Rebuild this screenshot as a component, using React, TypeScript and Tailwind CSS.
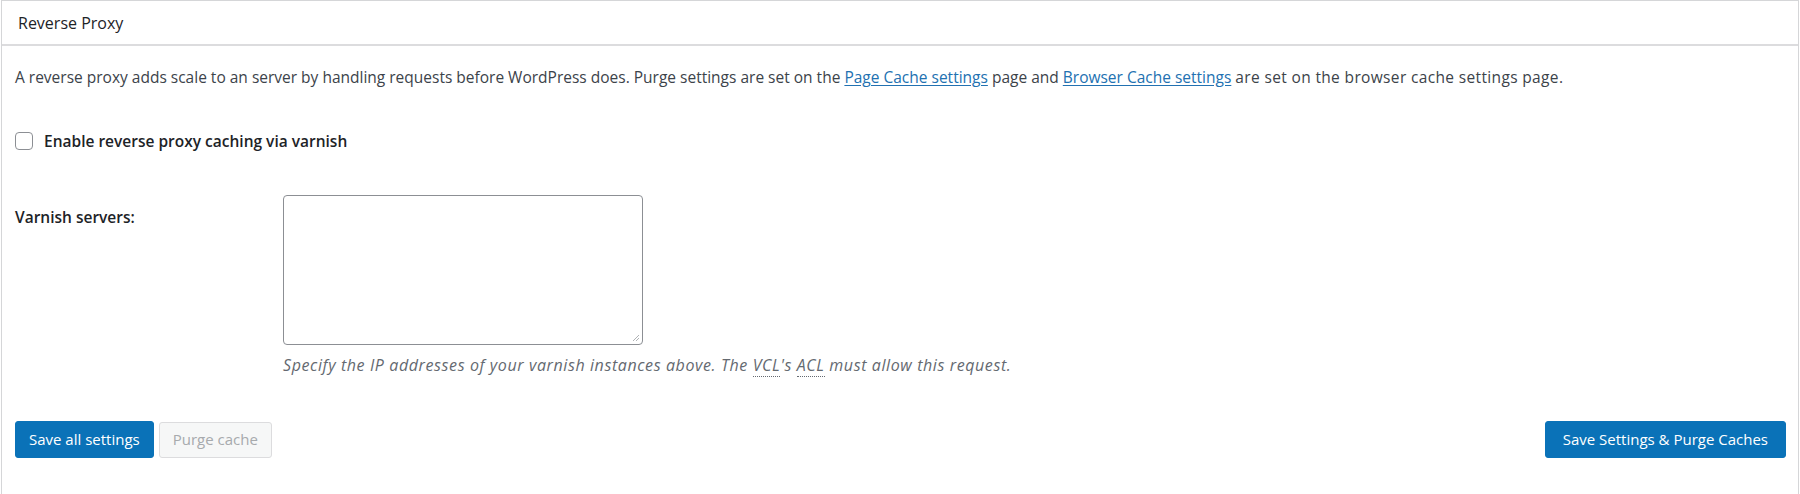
const FONT = "font-['Open_Sans',_'Noto_Sans',_sans-serif]";

export default function App() {
  return (
    <div className={`w-[1800px] h-[494px] bg-white ${FONT} text-[#3c434a] text-[15.5px]`}>
      <div className="ml-px mr-[1px] h-full border-x border-t border-[#d5d6d8] bg-white">
        {/* header */}
        <div className="h-[45px] flex items-center pl-[16px] border-b-2 border-[#dcdcde]">
          <h2 className="text-[16px] text-[#1d2327] font-medium">Reverse Proxy</h2>
        </div>

        <div className="pl-[13px] pr-[12px]">
          <p className="mt-[19px] leading-[24px]">
            A reverse proxy adds scale to an server by handling requests before WordPress does. Purge settings are set on the{" "}
            <a href="#" className="text-[#2271b1] underline underline-offset-2">Page Cache settings</a> page and{" "}
            <a href="#" className="text-[#2271b1] underline underline-offset-2">Browser Cache settings</a>{" "}
            <span className="tracking-[0.35px]">are set on the browser cache settings page.</span>
          </p>

          <label className="mt-[40px] flex items-center gap-[11px]">
            <span className="w-[18px] h-[18px] rounded-[4px] border border-[#8c8f94] bg-white shrink-0" />
            <span className="font-semibold text-[#1d2327] leading-[24px]">Enable reverse proxy caching via varnish</span>
          </label>

          <div className="mt-[42px] flex">
            <div className="w-[268px] pt-[10px] font-semibold text-[#1d2327] leading-[24px]">Varnish servers:</div>
            <div>
              <div className="relative w-[360px] h-[150px] rounded-[4px] border border-[#8c8f94] bg-white">
                <svg className="absolute right-[2px] bottom-[2px]" width="9" height="9" viewBox="0 0 9 9">
                  <path d="M8 2 L2 8 M8 5 L5 8" stroke="#b0b3b6" strokeWidth="1" />
                </svg>
              </div>
              <p className="mt-[8px] italic text-[#646970] text-[16px] tracking-[0.6px] leading-[24px]">
                Specify the IP addresses of your varnish instances above. The{" "}
                <abbr className="no-underline border-b border-dotted border-[#646970]">VCL</abbr>'s{" "}
                <abbr className="no-underline border-b border-dotted border-[#646970]">ACL</abbr> must allow this request.
              </p>
            </div>
          </div>

          <div className="mt-[44px] flex items-center">
            <button className="h-[37px] px-[13px] rounded-[3px] bg-[#0a72b8] border border-[#0a72b8] text-white text-[15px]">
              Save all settings
            </button>
            <button className="ml-[5px] h-[36px] px-[13px] rounded-[3px] bg-[#f6f7f7] border border-[#dcdcde] text-[#a7aaad] text-[15px]">
              Purge cache
            </button>
            <button className="ml-auto h-[37px] px-[17px] rounded-[3px] bg-[#0a72b8] border border-[#0a72b8] text-white text-[15px]">
              Save Settings &amp; Purge Caches
            </button>
          </div>
        </div>
      </div>
    </div>
  );
}
